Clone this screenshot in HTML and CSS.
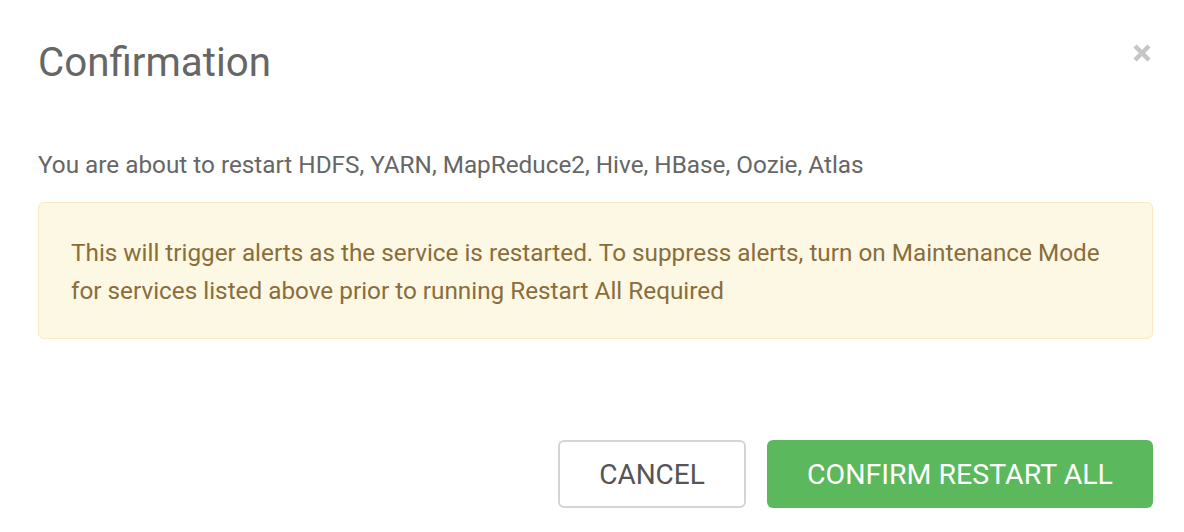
FILE: index.html
```html
<!DOCTYPE html>
<html lang="en">
<head>
  <meta charset="UTF-8">
  <meta name="viewport" content="width=device-width, initial-scale=1.0">
  <title>Confirmation</title>
  <link rel="stylesheet" href="styles.css">
</head>
<body>
  <div class="modalBox">
    <div class="modalHeader">
      <h2 class="modalTitle">Confirmation</h2>
      <button class="closeButton" aria-label="Close">
        <svg width="20" height="20" viewBox="0 0 20 20">
          <path d="M3 3 L17 17 M17 3 L3 17" stroke="#c6c6c6" stroke-width="4.5" stroke-linecap="butt"/>
        </svg>
      </button>
    </div>

    <div class="modalBody">
      <p class="introText">You are about to restart HDFS, YARN, MapReduce2, Hive, HBase, Oozie, Atlas</p>
      <div class="alertWarning">
        This will trigger alerts as the service is restarted. To suppress alerts, turn on Maintenance Mode
        for services listed above prior to running Restart All Required
      </div>
    </div>

    <div class="modalFooter">
      <button class="btn btnDefault">CANCEL</button>
      <button class="btn btnSuccess">CONFIRM RESTART ALL</button>
    </div>
  </div>
</body>
</html>
```

FILE: styles.css
```css
body {
  font-family: Roboto, "Liberation Sans", sans-serif;
  background-color: #fff;
  margin: 0;
  padding: 0;
}

.modalBox {
  padding: 0 31px 0 38px;
}

.modalHeader {
  display: flex;
  justify-content: space-between;
  align-items: flex-start;
  padding-top: 41px;
}
.modalTitle {
  margin: 0;
  font-size: 40.3px;
  font-weight: 400;
  line-height: 44px;
  color: #666;
}
.closeButton {
  margin-top: 2px;
  margin-right: 1px;
  padding: 0;
  border: 0;
  background: none;
  cursor: pointer;
}

.modalBody {
  padding-top: 66px;
}
.introText {
  margin: 0 0 23px;
  font-size: 24.3px;
  line-height: 28px;
  color: #666;
}
.alertWarning {
  padding: 31px 32px 28px;
  border: 1px solid #f9e9c6;
  border-radius: 6px;
  background-color: #fcf8e4;
  color: #8a6d3b;
  font-size: 24.3px;
  line-height: 38px;
}

.modalFooter {
  display: flex;
  justify-content: flex-end;
  gap: 21px;
  padding-top: 101px;
}
.btn {
  height: 68px;
  padding-top: 2px;
  border-radius: 6px;
  font-family: Roboto, "Liberation Sans", sans-serif;
  font-size: 28px;
  cursor: pointer;
}
.btnDefault {
  width: 188px;
  border: 2px solid #d4d4d4;
  background-color: #fff;
  color: #555;
}
.btnSuccess {
  width: 386px;
  border: 0;
  background-color: #5cb85c;
  color: #fff;
  font-size: 28.5px;
}
```
